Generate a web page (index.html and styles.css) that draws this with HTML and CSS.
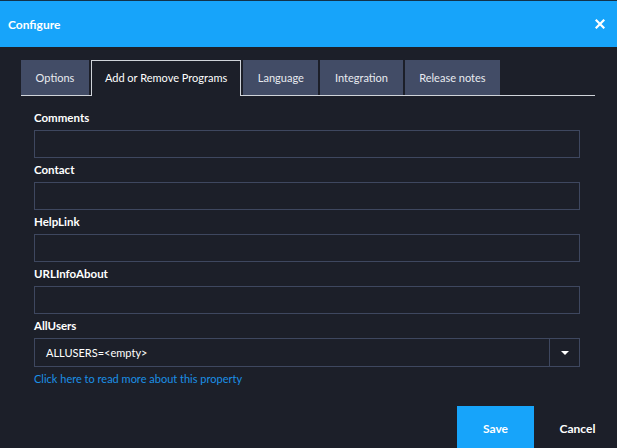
FILE: index.html
```html
<!DOCTYPE html>
<html>
<head>
<meta charset="utf-8">
<link rel="stylesheet" href="styles.css">
</head>
<body>
<div class="dialog">
  <header class="titlebar">
    <span class="title">Configure</span>
    <svg class="close" width="10" height="10" viewBox="0 0 10 10"><path d="M1.5 1.5 L8.5 8.5 M8.5 1.5 L1.5 8.5" stroke="#fff" stroke-width="2.2" stroke-linecap="square"/></svg>
  </header>
  <main class="content">
    <nav class="tabs">
      <div class="tab">Options</div>
      <div class="tab active">Add or Remove Programs</div>
      <div class="tab">Language</div>
      <div class="tab">Integration</div>
      <div class="tab">Release notes</div>
    </nav>
    <form class="form">
      <div class="group">
        <label class="label">Comments</label>
        <div class="input"></div>
      </div>
      <div class="group">
        <label class="label">Contact</label>
        <div class="input"></div>
      </div>
      <div class="group">
        <label class="label">HelpLink</label>
        <div class="input"></div>
      </div>
      <div class="group">
        <label class="label">URLInfoAbout</label>
        <div class="input"></div>
      </div>
      <div class="group">
        <label class="label">AllUsers</label>
        <div class="select">
          <span class="select-value">ALLUSERS=&lt;empty&gt;</span>
          <span class="select-btn"><svg width="8" height="4" viewBox="0 0 8 4"><path d="M0 0 H8 L4 4 Z" fill="#fff"/></svg></span>
        </div>
        <a class="link">Click here to read more about this property</a>
      </div>
    </form>
    <div class="footer">
      <button class="btn primary">Save</button>
      <button class="btn">Cancel</button>
    </div>
  </main>
</div>
</body>
</html>
```

FILE: styles.css
```css
html, body {
  margin: 0;
  padding: 0;
  background: #1c1f29;
  font-family: Lato, "Noto Sans", sans-serif;
  color: #ffffff;
  overflow: hidden;
}
.dialog {
  width: 617px;
  height: 448px;
}
.titlebar {
  height: 46px;
  border-top: 1px solid #12324a;
  background: #17a4fa;
  display: flex;
  align-items: center;
  justify-content: space-between;
  padding: 0 12px 0 8px;
}
.title {
  font-size: 12px;
  font-weight: 700;
  color: #fff;
}
.close {
  display: block;
}
.content {
  padding: 13px 22px 0 21px;
}
.tabs {
  display: flex;
  gap: 2px;
  height: 35px;
  border-bottom: 1px solid #cfd3d9;
}
.tab {
  background: #424c66;
  color: #e8ebf0;
  font-size: 11px;
  line-height: 35px;
  padding: 0 14.6px;
  white-space: nowrap;
}
.tab.active {
  background: #1c1f29;
  border: 1px solid #cfd3d9;
  border-bottom: none;
  line-height: 34px;
  height: 35px;
  padding: 0 13px;
  color: #fff;
}
.form {
  margin: 0 15px 0 13px;
  padding-top: 14px;
}
.group {
  margin-bottom: 4px;
}
.label {
  display: block;
  font-size: 11.5px;
  font-weight: 700;
  line-height: 16px;
  margin-bottom: 4px;
}
.input {
  height: 26px;
  border: 1px solid #3e475f;
}
.select {
  height: 27px;
  border: 1px solid #3e475f;
  display: flex;
  align-items: stretch;
}
.select-value {
  flex: 1;
  font-size: 11px;
  line-height: 27px;
  padding-left: 11px;
}
.select-btn {
  width: 29px;
  border-left: 1px solid #3e475f;
  display: flex;
  align-items: center;
  justify-content: center;
}
.link {
  display: block;
  color: #1b8fe6;
  font-size: 11px;
  line-height: 16px;
  margin-top: 4px;
}
.footer {
  display: flex;
  justify-content: flex-end;
  gap: 5px;
  margin-top: 19px;
  margin-right: -21px;
}
.btn {
  font-family: inherit;
  font-size: 12px;
  font-weight: 700;
  color: #fff;
  background: transparent;
  border: none;
  width: 77px;
  height: 44px;
  padding: 0;
}
.btn.primary {
  background: #17a4fa;
}
```
